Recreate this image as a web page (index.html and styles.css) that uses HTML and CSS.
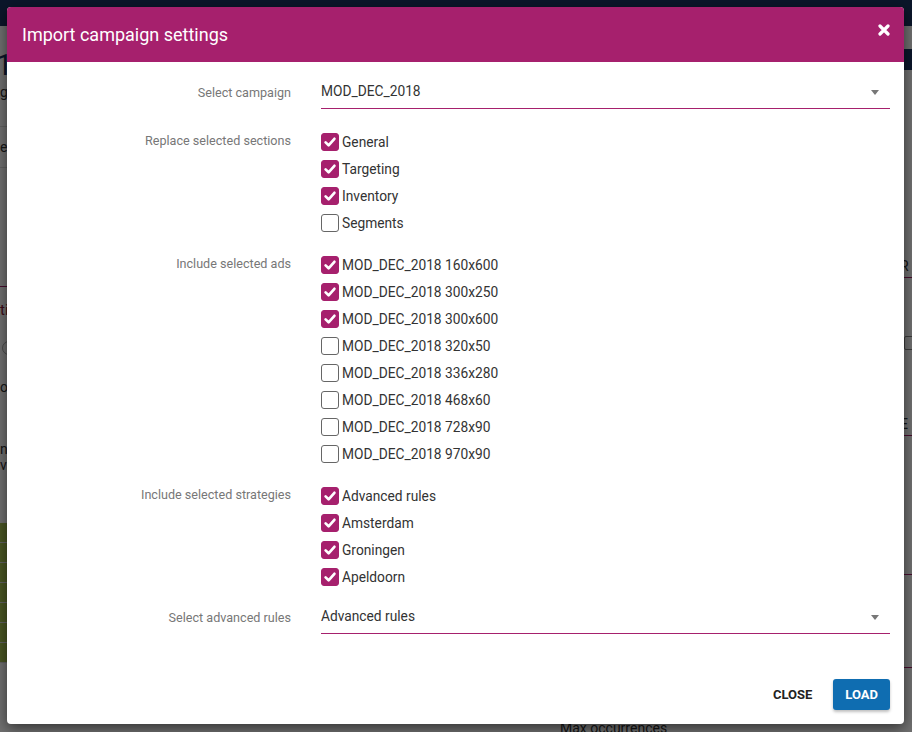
FILE: index.html
```html
<!DOCTYPE html>
<html lang="en">
<head>
<meta charset="utf-8">
<title>Import campaign settings</title>
<link rel="stylesheet" href="styles.css">
</head>
<body>
<div class="page">
  <div class="topbar"></div>
  <div class="subbar"><div class="subbar-btn"></div></div>
  <div class="page-content">
    <div class="left-col">
      <div class="big-num">12</div>
      <div class="small-text">g</div>
      <div class="rule"></div>
      <div class="small-text mid">e</div>
      <div class="rule"></div>
      <div class="mag-rule"></div>
      <div class="red-text">ti</div>
      <div class="circle"></div>
      <div class="small-text or">or</div>
      <div class="small-text n">n</div>
      <div class="small-text">v</div>
      <div class="green-table">
        <div></div><div></div><div></div><div></div><div></div><div></div><div></div>
      </div>
    </div>
    <div class="mid-col">
      <div class="foot-text">Max occurrences</div>
    </div>
    <div class="right-col">
      <div class="r-label">R</div>
      <div class="mag-rule"></div>
      <div class="r-box"></div>
      <div class="r-label e">E</div>
      <div class="mag-rule"></div>
      <div class="mag-rule low"></div>
      <div class="mag-rule low2"></div>
    </div>
  </div>
</div>
<div class="overlay"></div>

<div class="modal">
  <div class="modal-header">
    <h2 class="modal-title">Import campaign settings</h2>
    <svg class="close-icon" width="12" height="12" viewBox="0 0 12 12" aria-label="close">
      <path d="M2 2 L10 10 M10 2 L2 10" stroke="#fff" stroke-width="3.2" stroke-linecap="round"/>
    </svg>
  </div>
  <div class="modal-body">
    <div class="form-row select-row first">
      <div class="form-label">Select campaign</div>
      <div class="form-control select">
        <span>MOD_DEC_2018</span>
        <span class="caret"></span>
      </div>
    </div>

    <div class="form-row group-row first-group">
      <div class="form-label">Replace selected sections</div>
      <div class="form-control checklist">
        <div class="check-item"><span class="box on"><svg viewBox="0 0 18 18"><path d="M4.6 9.4 L7.6 12.3 L13.4 5.8"/></svg></span>General</div>
        <div class="check-item"><span class="box on"><svg viewBox="0 0 18 18"><path d="M4.6 9.4 L7.6 12.3 L13.4 5.8"/></svg></span>Targeting</div>
        <div class="check-item"><span class="box on"><svg viewBox="0 0 18 18"><path d="M4.6 9.4 L7.6 12.3 L13.4 5.8"/></svg></span>Inventory</div>
        <div class="check-item"><span class="box"></span>Segments</div>
      </div>
    </div>

    <div class="form-row group-row">
      <div class="form-label">Include selected ads</div>
      <div class="form-control checklist">
        <div class="check-item"><span class="box on"><svg viewBox="0 0 18 18"><path d="M4.6 9.4 L7.6 12.3 L13.4 5.8"/></svg></span>MOD_DEC_2018 160x600</div>
        <div class="check-item"><span class="box on"><svg viewBox="0 0 18 18"><path d="M4.6 9.4 L7.6 12.3 L13.4 5.8"/></svg></span>MOD_DEC_2018 300x250</div>
        <div class="check-item"><span class="box on"><svg viewBox="0 0 18 18"><path d="M4.6 9.4 L7.6 12.3 L13.4 5.8"/></svg></span>MOD_DEC_2018 300x600</div>
        <div class="check-item"><span class="box"></span>MOD_DEC_2018 320x50</div>
        <div class="check-item"><span class="box"></span>MOD_DEC_2018 336x280</div>
        <div class="check-item"><span class="box"></span>MOD_DEC_2018 468x60</div>
        <div class="check-item"><span class="box"></span>MOD_DEC_2018 728x90</div>
        <div class="check-item"><span class="box"></span>MOD_DEC_2018 970x90</div>
      </div>
    </div>

    <div class="form-row group-row">
      <div class="form-label">Include selected strategies</div>
      <div class="form-control checklist">
        <div class="check-item"><span class="box on"><svg viewBox="0 0 18 18"><path d="M4.6 9.4 L7.6 12.3 L13.4 5.8"/></svg></span>Advanced rules</div>
        <div class="check-item"><span class="box on"><svg viewBox="0 0 18 18"><path d="M4.6 9.4 L7.6 12.3 L13.4 5.8"/></svg></span>Amsterdam</div>
        <div class="check-item"><span class="box on"><svg viewBox="0 0 18 18"><path d="M4.6 9.4 L7.6 12.3 L13.4 5.8"/></svg></span>Groningen</div>
        <div class="check-item"><span class="box on"><svg viewBox="0 0 18 18"><path d="M4.6 9.4 L7.6 12.3 L13.4 5.8"/></svg></span>Apeldoorn</div>
      </div>
    </div>

    <div class="form-row select-row last">
      <div class="form-label">Select advanced rules</div>
      <div class="form-control select">
        <span>Advanced rules</span>
        <span class="caret"></span>
      </div>
    </div>
  </div>
  <div class="modal-footer">
    <button class="btn btn-flat">CLOSE</button>
    <button class="btn btn-primary">LOAD</button>
  </div>
</div>
</body>
</html>
```

FILE: styles.css
```css
* { box-sizing: border-box; }
html, body { margin: 0; padding: 0; }
body {
  width: 912px;
  height: 732px;
  overflow: hidden;
  font-family: Roboto, "Liberation Sans", Arial, sans-serif;
  background: #fff;
  position: relative;
}

/* ---------- background page ---------- */
.page { display: flex; flex-direction: column; height: 732px; }
.topbar { height: 26px; background: #1b3461; }
.subbar { height: 44px; display: flex; justify-content: flex-end; align-items: flex-end; }
.subbar-btn { width: 60px; height: 21px; background: #1b3461; }
.page-content { flex: 1; display: flex; justify-content: space-between; }
.left-col { width: 120px; display: flex; flex-direction: column; }
.big-num { font-size: 30px; line-height: 30px; color: #1b3461; margin: -20px 0 0 -4px; }
.small-text { font-size: 14px; color: #333; line-height: 16px; }
.left-col .small-text:nth-child(2) { margin-top: 4px; }
.rule { height: 1px; background: #ddd; margin-top: 26px; }
.small-text.mid { margin-top: 12px; margin-bottom: -14px; }
.mag-rule { height: 1px; background: #a51f6a; }
.left-col .mag-rule { margin-top: 118px; }
.red-text { font-size: 15px; color: #8b1b3a; margin-top: 14px; }
.circle { width: 14px; height: 14px; border: 1px solid #aaa; border-radius: 50%; margin: 22px 0 0 2px; }
.small-text.or { margin-top: 24px; }
.small-text.n { margin-top: 46px; }
.green-table { margin-top: 50px; width: 40px; display: flex; flex-direction: column; }
.green-table div { height: 20px; background: #a9c452; border-bottom: 1px solid #ddd; }
.mid-col { display: flex; flex-direction: column; justify-content: flex-end; margin-left: 440px; }
.foot-text { font-size: 14px; color: #333; white-space: nowrap; line-height: 16px; margin-bottom: -4px; }
.right-col { width: 12px; display: flex; flex-direction: column; margin-left: auto; }
.r-label { font-size: 14px; color: #333; margin-top: 188px; line-height: 16px; }
.r-label.e { margin-top: 66px; }
.right-col .mag-rule { margin-top: 3px; }
.r-box { width: 14px; height: 14px; border: 1px solid #888; border-radius: 2px; margin-top: 58px; margin-left: 4px; }
.right-col .mag-rule.low { margin-top: 138px; }
.right-col .mag-rule.low2 { margin-top: 92px; }

.overlay {
  position: absolute;
  inset: 0;
  background: rgba(0, 0, 0, 0.56);
}

/* ---------- modal ---------- */
.modal {
  position: absolute;
  left: 7px;
  top: 7px;
  width: 897px;
  height: 717px;
  background: #fff;
  border-radius: 4px;
  box-shadow: 0 4px 14px rgba(0, 0, 0, 0.55);
  display: flex;
  flex-direction: column;
}
.modal-header {
  height: 55px;
  background: #a6206d;
  border-radius: 4px 4px 0 0;
  display: flex;
  align-items: center;
  justify-content: space-between;
  padding: 0 14px 0 15px;
}
.modal-title {
  margin: 0;
  font-size: 18px;
  font-weight: 400;
  color: #fff;
}
.close-icon { align-self: flex-start; margin-top: 17px; display: block; }

.modal-body { flex: 1; padding: 10px 14px 0 0; }
.form-row { display: flex; }
.form-label {
  width: 284px;
  flex: none;
  text-align: right;
  font-size: 12.6px;
  color: #777;
  line-height: 18px;
  padding-top: 4px;
}
.form-control { flex: 1; margin-left: 30px; }

.select-row .form-label { padding-top: 12px; }
.select {
  height: 37px;
  border-bottom: 1px solid #a6206d;
  display: flex;
  align-items: center;
  justify-content: space-between;
  font-size: 13.75px;
  color: #333;
  padding: 1px 11px 0 0;
}
.caret {
  width: 0; height: 0;
  border-left: 4px solid transparent;
  border-right: 4px solid transparent;
  border-top: 5px solid #777;
  margin-top: 3px;
}
.group-row { margin-top: 15px; }
.group-row.first-group { margin-top: 19px; }
.select-row.last { margin-top: 7px; }

.checklist { display: flex; flex-direction: column; }
.check-item {
  height: 27px;
  display: flex;
  align-items: center;
  font-size: 13.75px;
  color: #333;
}
.box {
  width: 18px;
  height: 18px;
  border: 1px solid #666;
  border-radius: 3px;
  margin-right: 3px;
  flex: none;
  background: #fff;
  display: flex;
}
.box.on { background: #a6206d; border-color: #a6206d; }
.box svg { width: 18px; height: 18px; margin: -1px; display: block; }
.box svg path { fill: none; stroke: #fff; stroke-width: 2.7; stroke-linecap: round; stroke-linejoin: round; }

.modal-footer {
  display: flex;
  justify-content: flex-end;
  align-items: center;
  gap: 11px;
  padding: 0 14px 14px 0;
}
.btn {
  font-family: Roboto, "Liberation Sans", Arial, sans-serif;
  font-size: 13px;
  font-weight: 700;
  height: 31px;
  border: none;
  border-radius: 3px;
  padding: 0 12px;
  cursor: pointer;
}
.btn-flat { background: transparent; color: #222; padding: 0 10px; }
.btn-primary {
  background: #0f6db1;
  color: #fff;
  box-shadow: 0 2px 3px rgba(0, 0, 0, 0.25);
}
```
